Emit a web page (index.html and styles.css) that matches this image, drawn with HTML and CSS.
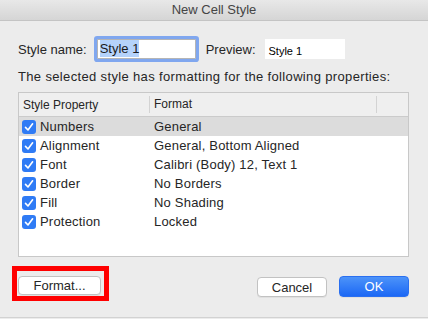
FILE: index.html
```html
<!DOCTYPE html>
<html lang="en">
<head>
    <meta charset="UTF-8">
    <title>New Cell Style</title>
    <link rel="stylesheet" href="styles.css">
</head>
<body>
    <div class="window">
        <div class="titlebar">New Cell Style</div>

        <div class="content">
            <div class="name-row">
                <label for="style-name">Style name:</label>
                <div class="name-field"><span class="selected">Style 1</span></div>
                <span class="preview-label">Preview:</span>
                <div class="preview-box">Style 1</div>
            </div>

            <p class="desc">The selected style has formatting for the following properties:</p>

            <div class="table">
                <div class="table-head">
                    <div class="col-prop">Style Property</div>
                    <div class="col-format">Format</div>
                    <div class="col-rest"></div>
                </div>
                <div class="row selected-row">
                    <div class="col-prop"><span class="check"></span>Numbers</div>
                    <div class="col-format">General</div>
                </div>
                <div class="row">
                    <div class="col-prop"><span class="check"></span>Alignment</div>
                    <div class="col-format">General, Bottom Aligned</div>
                </div>
                <div class="row">
                    <div class="col-prop"><span class="check"></span>Font</div>
                    <div class="col-format">Calibri (Body) 12, Text 1</div>
                </div>
                <div class="row">
                    <div class="col-prop"><span class="check"></span>Border</div>
                    <div class="col-format">No Borders</div>
                </div>
                <div class="row">
                    <div class="col-prop"><span class="check"></span>Fill</div>
                    <div class="col-format">No Shading</div>
                </div>
                <div class="row">
                    <div class="col-prop"><span class="check"></span>Protection</div>
                    <div class="col-format">Locked</div>
                </div>
            </div>
        </div>

        <div class="footer">
            <div class="highlight">
                <button class="btn btn-format">Format...</button>
            </div>
            <div class="actions">
                <button class="btn btn-cancel">Cancel</button>
                <button class="btn btn-ok">OK</button>
            </div>
        </div>
    </div>
</body>
</html>
```

FILE: styles.css
```css
body {
    margin: 0;
    padding: 0;
    background-color: #ececec;
    font-family: "Liberation Sans", Arial, sans-serif;
    font-size: 13px;
    color: #262626;
}

.window {
    width: 428px;
    height: 317px;
    background-color: #ececec;
    border-bottom: 1px solid #d2d2d2;
}

.titlebar {
    height: 20px;
    line-height: 20px;
    text-align: center;
    color: #444;
    background: linear-gradient(#e8e8e8, #d5d5d5);
    border-bottom: 1px solid #c4c4c4;
}

.content {
    padding: 16px 19px 0 18px;
}

.name-row {
    display: flex;
    align-items: center;
    height: 24px;
}

.name-field {
    width: 95px;
    height: 18px;
    line-height: 18px;
    margin-left: 10px;
    padding-left: 2px;
    background-color: #fff;
    border: 1px solid #b5b5b5;
    box-shadow: 0 0 0 3px #80a7ef;
    border-radius: 1px;
    box-sizing: content-box;
}

.selected {
    background-color: #b5d3fb;
    padding: 1px 0;
    color: #1a1a1a;
}

.preview-label {
    margin-left: 10px;
}

.preview-box {
    width: 80px;
    height: 20px;
    margin-left: 9px;
    padding: 3px 0 0 4px;
    box-sizing: border-box;
    background-color: #fff;
    font-size: 11px;
    line-height: 18px;
    color: #000;
}

.desc {
    margin: 8px 0 0;
    line-height: 16px;
    letter-spacing: 0.35px;
}

.table {
    margin-top: 7px;
    height: 165px;
    box-sizing: border-box;
    background-color: #fff;
    border: 1px solid #c8c8c8;
}

.table-head {
    display: flex;
    height: 23px;
    background-color: #efefef;
    border-bottom: 1px solid #cbcbcb;
    font-size: 12px;
    align-items: center;
}

.table-head .col-prop {
    padding-left: 4px;
}

.table-head .col-format,
.table-head .col-rest {
    border-left: 1px solid #d3d3d3;
    line-height: 17px;
}

.table-head .col-format {
    padding-left: 4px;
}

.col-prop {
    width: 130px;
    box-sizing: border-box;
    display: flex;
    align-items: center;
}

.col-format {
    width: 227px;
    box-sizing: border-box;
    padding-left: 5px;
}

.col-rest {
    flex: 1;
    height: 17px;
}

.row {
    display: flex;
    align-items: center;
    height: 19px;
    letter-spacing: 0.2px;
}

.selected-row {
    background-color: #dcdcdc;
}

.row .col-prop {
    padding-left: 3px;
}

.check {
    width: 14px;
    height: 14px;
    margin-right: 4px;
    border-radius: 3px;
    background-color: #2f7bf5;
    background-image: url("data:image/svg+xml;utf8,<svg xmlns='http://www.w3.org/2000/svg' viewBox='0 0 14 14'><path d='M3.5 7.4 L6 10 L10.6 3.8' fill='none' stroke='white' stroke-width='1.6' stroke-linecap='round' stroke-linejoin='round'/></svg>");
}

.footer {
    display: flex;
    justify-content: space-between;
    align-items: flex-start;
    margin-top: 9px;
    padding: 0 19px 0 12px;
}

.highlight {
    border: 5px solid #ff0000;
    padding: 5px 3px 1px 1px;
}

.btn {
    font-family: "Liberation Sans", Arial, sans-serif;
    font-size: 13px;
    color: #262626;
    background-color: #fff;
    border: 1px solid #c2c2c2;
    border-radius: 4px;
    padding: 0;
    box-shadow: 0 1px 0 rgba(0, 0, 0, 0.05);
}

.btn-format {
    display: block;
    width: 83px;
    height: 19px;
}

.actions {
    display: flex;
    align-items: flex-start;
    gap: 12px;
    margin-top: 10px;
}

.btn-cancel {
    width: 70px;
    height: 20px;
    margin-top: 1px;
}

.btn-ok {
    width: 70px;
    height: 21px;
    color: #fff;
    border: 1px solid #2a6ff0;
    background: linear-gradient(#4c93f9, #1c68f5);
}
```
